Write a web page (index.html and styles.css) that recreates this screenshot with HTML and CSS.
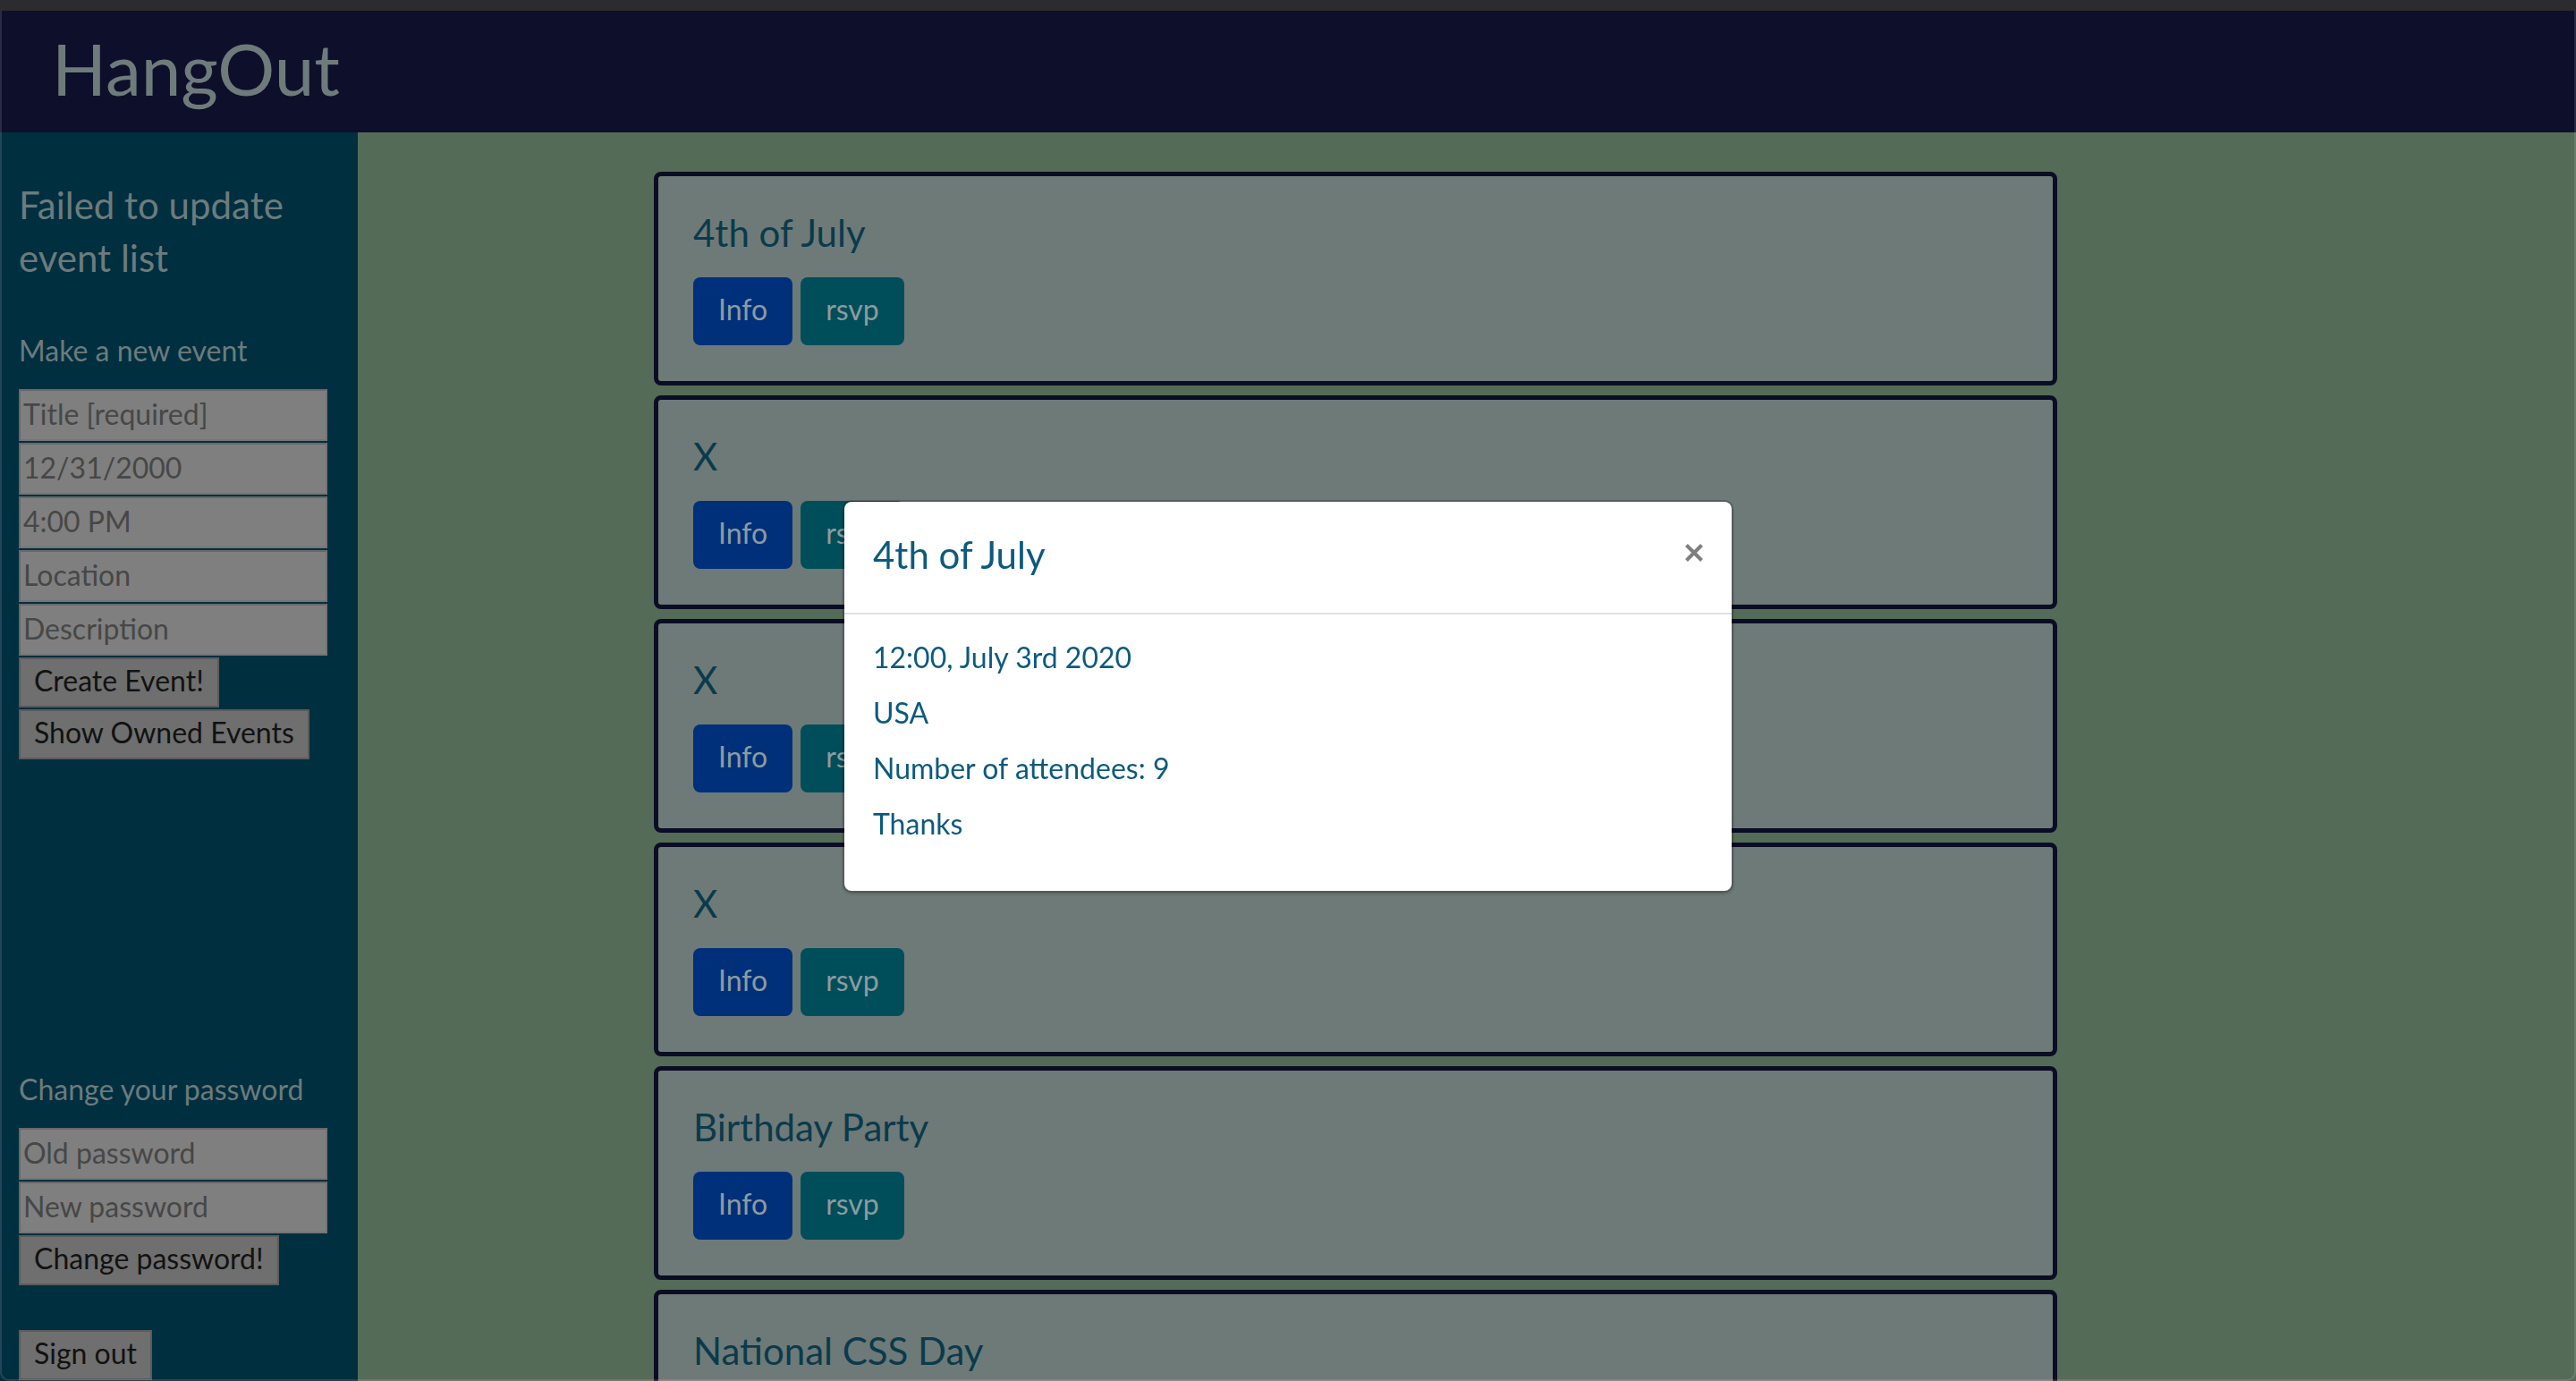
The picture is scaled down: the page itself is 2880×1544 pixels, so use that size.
FILE: index.html
```html
<!DOCTYPE html>
<html lang="en">
<head>
<meta charset="utf-8">
<title>HangOut</title>
<link rel="stylesheet" href="styles.css">
</head>
<body>
<div class="chrome"></div>
<header class="topbar">
  <h1 class="brand">HangOut</h1>
</header>
<div class="layout">
  <aside class="sidebar">
    <p class="status">Failed to update event list</p>
    <h2 class="section-label label-event">Make a new event</h2>
    <form class="form">
      <input class="field" type="text" placeholder="Title [required]">
      <input class="field" type="text" placeholder="12/31/2000">
      <input class="field" type="text" placeholder="4:00 PM">
      <input class="field" type="text" placeholder="Location">
      <input class="field" type="text" placeholder="Description">
      <button class="sys-btn" type="button">Create Event!</button>
      <button class="sys-btn" type="button">Show Owned Events</button>
    </form>
    <h2 class="section-label label-password">Change your password</h2>
    <form class="form">
      <input class="field" type="password" placeholder="Old password">
      <input class="field" type="password" placeholder="New password">
      <button class="sys-btn" type="button">Change password!</button>
    </form>
    <button class="sys-btn signout" type="button">Sign out</button>
  </aside>
  <main class="events">
    <section class="event-card">
      <h3 class="event-title">4th of July</h3>
      <div class="actions"><button class="btn btn-info" type="button">Info</button><button class="btn btn-rsvp" type="button">rsvp</button></div>
    </section>
    <section class="event-card">
      <h3 class="event-title">X</h3>
      <div class="actions"><button class="btn btn-info" type="button">Info</button><button class="btn btn-rsvp" type="button">rsvp</button></div>
    </section>
    <section class="event-card">
      <h3 class="event-title">X</h3>
      <div class="actions"><button class="btn btn-info" type="button">Info</button><button class="btn btn-rsvp" type="button">rsvp</button></div>
    </section>
    <section class="event-card">
      <h3 class="event-title">X</h3>
      <div class="actions"><button class="btn btn-info" type="button">Info</button><button class="btn btn-rsvp" type="button">rsvp</button></div>
    </section>
    <section class="event-card">
      <h3 class="event-title">Birthday Party</h3>
      <div class="actions"><button class="btn btn-info" type="button">Info</button><button class="btn btn-rsvp" type="button">rsvp</button></div>
    </section>
    <section class="event-card">
      <h3 class="event-title">National CSS Day</h3>
    </section>
  </main>
</div>
<div class="modal" role="dialog">
  <div class="modal-header">
    <h4 class="modal-title">4th of July</h4>
    <button class="close" type="button" aria-label="Close">
      <svg width="20" height="20" viewBox="0 0 20 20"><path d="M1.5 1.5 L18.5 18.5 M18.5 1.5 L1.5 18.5" stroke="#7f7f7f" stroke-width="4" fill="none"/></svg>
    </button>
  </div>
  <div class="modal-body">
    <div class="modal-line">12:00, July 3rd 2020</div>
    <div class="modal-line">USA</div>
    <div class="modal-line">Number of attendees: 9</div>
    <div class="modal-line">Thanks</div>
  </div>
</div>
<div class="frame"></div>
</body>
</html>
```
FILE: styles.css
```css
* { box-sizing: border-box; }
html, body { margin: 0; padding: 0; }
body {
  font-family: Lato, "Noto Sans", sans-serif;
  background: #546c57;
}
.chrome { height: 12px; background: #2c2c30; }
.topbar {
  height: 136px;
  background: #0d0f2b;
  padding: 16px 0 0 58px;
}
.brand {
  margin: 0;
  font-weight: 400;
  font-size: 80px;
  line-height: 96px;
  color: #6f7b7b;
}
.layout { display: flex; align-items: stretch; }
.sidebar {
  width: 400px;
  flex: 0 0 400px;
  background: #002f40;
  padding: 52px 0 0 21px;
  min-height: 1396px;
  display: flex;
  flex-direction: column;
  align-items: flex-start;
}
.status {
  margin: 0;
  width: 340px;
  font-size: 42px;
  line-height: 59px;
  color: #6d7b7c;
}
.section-label {
  margin: 0;
  font-weight: 400;
  font-size: 32px;
  line-height: 48px;
  color: #6d7b7c;
}
.label-event { margin-top: 50px; }
.label-password { margin-top: 345px; }
.form {
  margin-top: 19px;
  display: flex;
  flex-direction: column;
  align-items: flex-start;
  gap: 2px;
}
.field {
  width: 345px;
  height: 58px;
  margin: 0;
  padding: 0 3px 4px;
  background: #7f7f7f;
  border: 2px solid;
  border-color: #686868 #757575 #757575 #686868;
  font-family: Lato, "Noto Sans", sans-serif;
  font-size: 32px;
  color: #1a1a1a;
}
.field::placeholder { color: #474747; opacity: 1; }
.sys-btn {
  height: 56px;
  margin: 0;
  padding: 0 15px 4px;
  background: #6f6f6f;
  border: 2px solid #5b5b5b;
  font-family: Lato, "Noto Sans", sans-serif;
  font-size: 32px;
  line-height: 48px;
  color: #121212;
}
.signout { margin-top: 50px; }
.events {
  flex: 1;
  padding: 44px 580px 0 331px;
}
.event-card {
  height: 239px;
  margin-bottom: 11px;
  background: #6e7a78;
  border: 5px solid #0b0d25;
  border-radius: 8px;
  padding: 33px 39px 40px;
}
.event-title {
  margin: 0;
  font-weight: 400;
  font-size: 42px;
  line-height: 60px;
  color: #0b3a4b;
}
.actions {
  margin-top: 20px;
  display: flex;
  gap: 9px;
}
.btn {
  height: 76px;
  padding: 0 28px 4px;
  border: none;
  border-radius: 8px;
  font-family: Lato, "Noto Sans", sans-serif;
  font-size: 32px;
  line-height: 72px;
  color: #8c9ba0;
}
.btn-info { background: #01307a; }
.btn-rsvp { background: #004e59; }
.modal {
  position: fixed;
  top: 559px;
  left: 50%;
  transform: translateX(-50%);
  width: 996px;
  background: #ffffff;
  border: 2px solid rgba(0, 0, 0, 0.2);
  border-radius: 10px;
  box-shadow: 0 2px 3px rgba(0, 0, 0, 0.15);
  background-clip: padding-box;
}
.modal-header {
  display: flex;
  align-items: center;
  justify-content: space-between;
  padding: 29px 32px 35px;
  border-bottom: 2px solid #dee2e6;
}
.modal-title {
  margin: 0;
  font-weight: 400;
  font-size: 42px;
  line-height: 60px;
  color: #0c5a7e;
}
.close {
  display: flex;
  padding: 0;
  margin: -4px 0 0;
  border: none;
  background: none;
}
.modal-body { padding: 17px 32px 44px; }
.modal-line {
  font-size: 32px;
  line-height: 62px;
  color: #0c5a7e;
}
.frame {
  position: fixed;
  inset: 12px 0 0 0;
  border: 2px solid rgba(255, 255, 255, 0.12);
  border-top: none;
  border-radius: 0 0 10px 10px;
  pointer-events: none;
}
```
